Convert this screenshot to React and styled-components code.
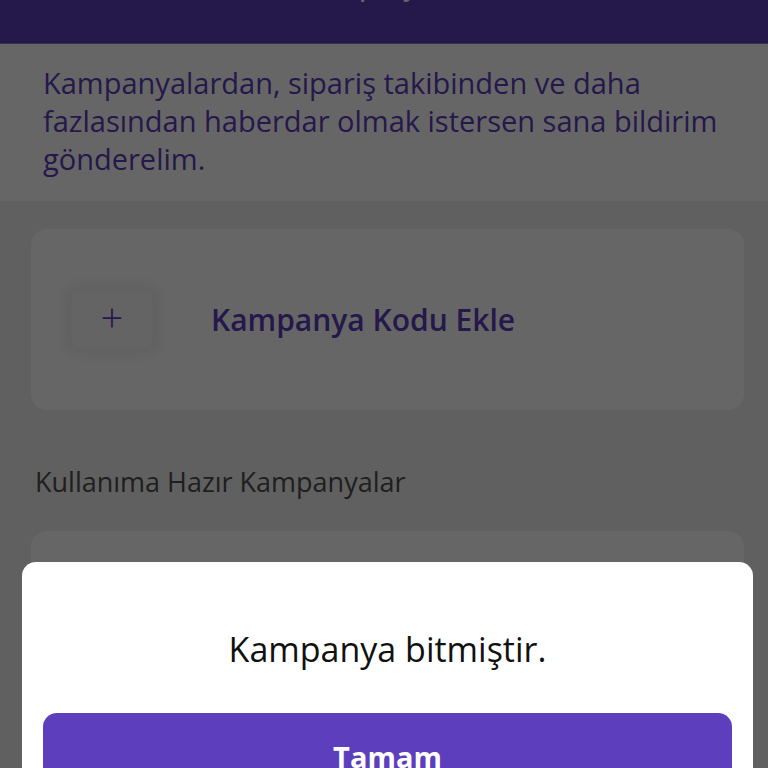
import React from 'react'
import styled, { createGlobalStyle } from 'styled-components'

const GlobalStyle = createGlobalStyle`
  html, body {
    margin: 0;
    padding: 0;
    height: 768px;
    overflow: hidden;
    background: #f0f0f0;
    font-family: 'Open Sans', 'Noto Sans', sans-serif;
  }
`

const Page = styled.div`
  width: 768px;
  height: 768px;
  display: flex;
  flex-direction: column;
  background: #f0f0f0;
`

const Header = styled.header`
  height: 43px;
  flex-shrink: 0;
  background: #5d3ebc;
  overflow: hidden;
  display: flex;
  justify-content: center;
  align-items: flex-start;
`

const HeaderTitle = styled.h1`
  margin: -27px 0 0;
  color: #fff;
  font-size: 24px;
  font-weight: 600;
  line-height: 28px;
`

const Banner = styled.div`
  background: #fff;
  padding: 20px 43px 23px;
  color: #5d3ebc;
  font-size: 29px;
  font-weight: 500;
  line-height: 38px;
  border-top: 1px solid #8a78c9;
`

const Content = styled.div`
  display: flex;
  flex-direction: column;
  padding: 28px 24px 0 31px;
`

const Card = styled.div`
  background: #fff;
  border-radius: 16px;
  height: ${p => p.$h}px;
  display: flex;
  align-items: center;
  padding: 0 41px;
  gap: 59px;
`

const PlusBox = styled.div`
  width: 80px;
  height: 57px;
  border-radius: 6px;
  background: #fafafa;
  box-shadow: 0 0 14px 8px rgba(0, 0, 0, 0.05);
  display: flex;
  align-items: center;
  justify-content: center;
  color: #5d3ebc;
  font-size: 40px;
  font-weight: 300;
  line-height: 1;
  padding-bottom: 6px;
  box-sizing: border-box;
`

const CardLabel = styled.span`
  color: #5d3ebc;
  font-size: 30px;
  font-weight: 600;
`

const SectionTitle = styled.h2`
  margin: 53px 0 30px 4px;
  font-size: 27px;
  font-weight: 500;
  color: #4f4f4f;
  line-height: 38px;
`

const Overlay = styled.div`
  position: fixed;
  inset: 0;
  background: rgba(0, 0, 0, 0.6);
`

const Modal = styled.div`
  position: fixed;
  left: 22px;
  right: 15px;
  top: 562px;
  height: 260px;
  background: #fff;
  border-radius: 14px;
  display: flex;
  flex-direction: column;
  align-items: center;
  padding: 63px 21px 0;
  box-sizing: border-box;
`

const ModalText = styled.p`
  margin: 0;
  font-size: 34px;
  font-weight: 500;
  color: #111;
  line-height: 48px;
`

const PrimaryButton = styled.button`
  margin-top: 40px;
  width: 100%;
  height: 90px;
  border: none;
  border-radius: 14px;
  background: #5d3ebc;
  color: #fff;
  font-family: inherit;
  font-size: 29px;
  font-weight: 700;
  padding-top: 24px;
  display: flex;
  justify-content: center;
  align-items: flex-start;
`

export default function App() {
  return (
    <>
      <GlobalStyle />
      <Page>
        <Header>
          <HeaderTitle>Kampanyalar</HeaderTitle>
        </Header>
        <Banner>
          Kampanyalardan, sipariş takibinden ve daha fazlasından haberdar olmak
          istersen sana bildirim gönderelim.
        </Banner>
        <Content>
          <Card $h={181}>
            <PlusBox>+</PlusBox>
            <CardLabel>Kampanya Kodu Ekle</CardLabel>
          </Card>
          <SectionTitle>Kullanıma Hazır Kampanyalar</SectionTitle>
          <Card $h={200} />
        </Content>
      </Page>
      <Overlay />
      <Modal>
        <ModalText>Kampanya bitmiştir.</ModalText>
        <PrimaryButton>Tamam</PrimaryButton>
      </Modal>
    </>
  )
}
